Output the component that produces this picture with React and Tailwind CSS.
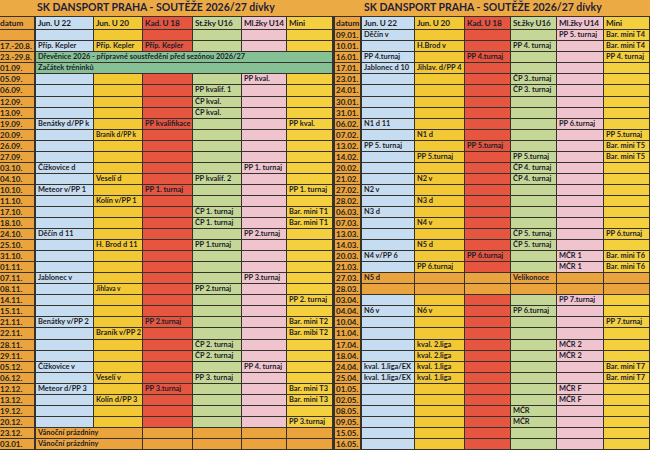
const BG = [
  'bg-[#eaa33d]',
  'bg-[#c6dcf0]',
  'bg-[#f2c935]',
  'bg-[#e5553f]',
  'bg-[#c5d797]',
  'bg-[#f0c4cf]',
  'bg-[#f4cf3e]',
];

const HEAD = ['datum', 'Jun. U 22', 'Jun. U 20', 'Kad. U 18', 'St.žky U16', 'Ml.žky U14', 'Mini'];

const e = '';
const LEFT = [
  [e, e, e, e, e, e, e],
  ['17.-20.8.', 'Příp. Kepler', 'Příp. Kepler', 'Příp. Kepler', e, e, e],
  { d: '23.-29.8.', green: 'Dřevěnice 2026 - přípravné soustředění před sezónou 2026/27' },
  { d: '01.09.', green: 'Začátek tréninků' },
  ['05.09.', e, e, e, e, 'PP kval.', e],
  ['06.09.', e, e, e, 'PP kvalif. 1', e, e],
  ['12.09.', e, e, e, 'ČP kval.', e, e],
  ['13.09.', e, e, e, 'ČP kval.', e, e],
  ['19.09.', 'Benátky d/PP k', e, 'PP kvalifikace', e, e, 'PP kval.'],
  ['20.09.', e, '~Braník d/PP k', e, e, e, e],
  ['26.09.', e, e, e, e, e, e],
  ['27.09.', e, e, e, e, e, e],
  ['03.10.', 'Čížkovice d', e, e, e, 'PP 1. turnaj', e],
  ['04.10.', e, 'Veselí d', e, 'PP kvalif. 2', e, e],
  ['10.10.', 'Meteor v/PP 1', e, 'PP 1. turnaj', e, e, 'PP 1. turnaj'],
  ['11.10.', e, 'Kolín v/PP 1', e, e, e, e],
  ['17.10.', e, e, e, 'ČP 1. turnaj', e, 'Bar. mini T1'],
  ['18.10.', e, e, e, 'ČP 1. turnaj', e, 'Bar. mini T1'],
  ['24.10.', 'Děčín d 11', e, e, e, 'PP 2.turnaj', e],
  ['25.10.', e, 'H. Brod d 11', e, 'PP 1.turnaj', e, e],
  ['31.10.', e, e, e, e, e, e],
  ['01.11.', e, e, e, e, e, e],
  ['07.11.', 'Jablonec v', e, e, e, 'PP 3.turnaj', e],
  ['08.11.', e, '~Jihlava v', e, 'PP 2.turnaj', e, e],
  ['14.11.', e, e, e, e, e, 'PP 2. turnaj'],
  ['15.11.', e, e, e, e, e, e],
  ['21.11.', 'Benátky v/PP 2', e, 'PP 2.turnaj', e, e, 'Bar. mini T2'],
  ['22.11.', e, 'Braník v/PP 2', e, e, e, 'Bar. mibi T2'],
  ['28.11.', e, e, e, 'ČP 2. turnaj', e, e],
  ['29.11.', e, e, e, 'ČP 2. turnaj', e, e],
  ['05.12.', 'Čížkovice v', e, e, e, 'PP 4. turnaj', e],
  ['06.12.', e, 'Veselí v', e, 'PP 3. turnaj', e, e],
  ['12.12.', 'Meteor d/PP 3', e, 'PP 3.turnaj', e, e, 'Bar. mini T3'],
  ['13.12.', e, 'Kolín d/PP 3', e, e, e, 'Bar. mini T3'],
  ['19.12.', e, e, e, e, e, e],
  ['20.12.', e, e, e, e, e, 'PP 3.turnaj'],
  { d: '23.12.', orange: ['Vánoční prázdniny', e, e, e, e] },
  { d: '03.01.', orange: ['Vánoční prázdniny', e, e, e, e] },
];

const RIGHT = [
  ['09.01.', 'Děčín v', e, e, e, 'PP 5. turnaj', 'Bar. mini T4'],
  ['10.01.', e, 'H.Brod v', e, 'PP 4. turnaj', e, 'Bar. mini T4'],
  ['16.01.', 'PP 4.turnaj', e, 'PP 4.turnaj', e, e, 'PP 4. turnaj'],
  ['17.01.', 'Jablonec d 10', 'Jihlav. d/PP 4', e, e, e, e],
  ['23.01.', e, e, e, 'ČP 3..turnaj', e, e],
  ['24.01.', e, e, e, 'ČP 3. turnaj', e, e],
  ['30.01.', e, e, e, e, e, e],
  ['31.01.', e, e, e, e, e, e],
  ['06.02.', 'N1 d 11', e, e, e, 'PP 6.turnaj', e],
  ['07.02.', e, 'N1 d', e, e, e, 'PP 5.turnaj'],
  ['13.02.', 'PP 5. turnaj', e, 'PP 5.turnaj', e, e, 'Bar. mini T5'],
  ['14.02.', e, 'PP 5.turnaj', e, 'PP 5.turnaj', e, 'Bar. mini T5'],
  ['20.02.', e, e, e, 'ČP 4. turnaj', e, e],
  ['21.02.', e, 'N2 v', e, 'ČP 4. turnaj', e, e],
  ['27.02.', 'N2 v', e, e, e, e, e],
  ['28.02.', e, 'N3 d', e, e, e, e],
  ['06.03.', 'N3 d', e, e, e, e, e],
  ['07.03.', e, 'N4 v', e, e, e, e],
  ['13.03.', e, e, e, 'ČP 5. turnaj', e, 'PP 6.turnaj'],
  ['14.03.', e, 'N5 d', e, 'ČP 5. turnaj', e, e],
  ['20.03.', 'N4 v/PP 6', e, 'PP 6.turnaj', e, 'MČR 1', 'Bar. mini T6'],
  ['21.03.', e, 'PP 6.turnaj', e, e, 'MČR 1', 'Bar. mini T6'],
  { d: '27.03.', orange: ['N5 d', e, e, 'Velikonoce', e, e] },
  { d: '28.03.', orange: [e, e, e, e, e, e] },
  ['03.04.', e, e, e, e, 'PP 7.turnaj', e],
  ['04.04.', 'N6 v', 'N6 v', e, 'PP 6.turnaj', e, e],
  ['10.04.', e, e, e, e, e, 'PP 7.turnaj'],
  ['11.04.', e, e, e, e, e, e],
  ['17.04.', e, 'kval. 2.liga', e, e, 'MČR 2', e],
  ['18.04.', e, 'kval. 2.liga', e, e, 'MČR 2', e],
  ['24.04.', 'kval. 1.liga/EX', 'kval. 1.liga', e, e, e, 'Bar. mini T7'],
  ['25.04.', 'kval. 1.liga/EX', 'kval. 1.liga', e, e, e, 'Bar. mini T7'],
  ['01.05.', e, e, e, e, 'MČR F', e],
  ['02.05.', e, e, e, e, 'MČR F', e],
  ['08.05.', e, e, e, 'MČR', e, e],
  ['09.05.', e, e, e, 'MČR', e, e],
  ['15.05.', e, e, e, e, e, e],
  ['16.05.', e, e, e, e, e, e],
];

const line = 'border-b border-r border-[#36322c]';
const txt = 'whitespace-nowrap font-bold text-[#1c1c2a]';

const Cell = ({ bg, children, span = '' }) => {
  const small = typeof children === 'string' && children.startsWith('~');
  return (
    <div className={`${bg} ${line} ${span} ${txt} pl-[2px] ${small ? 'text-[6.5px]' : 'text-[7.4px]'} leading-[10px]`}>
      {small ? children.slice(1) : children}
    </div>
  );
};

const DateCell = ({ children, right }) => (
  <div className={`${BG[0]} border-b border-r-2 border-[#36322c] ${right ? 'border-l-2 pl-px' : 'pl-0'} ${txt} text-[8px] leading-[10px] text-[#241f1a]`}>
    {children}
  </div>
);

const Table = ({ rows, cols, right }) => (
  <div className="flex flex-col">
    <div className={`h-[17px] flex items-center ${right ? 'pl-[31px]' : 'pl-[37px]'}`}>
      <span className="font-bold text-[10.5px] text-[#1d203c] whitespace-nowrap">SK DANSPORT PRAHA - SOUTĚŽE 2026/27 dívky</span>
    </div>
    <div className={`grid ${cols} grid-rows-[13px] auto-rows-[11.05px] border-t border-[#36322c]`}>
      {HEAD.map((h, i) =>
        i === 0 ? (
          <div key={h} className={`${BG[0]} border-b border-r-2 border-[#36322c] ${right ? 'border-l-2 pl-px' : ''} ${txt} text-[8.2px] leading-[12px] text-[#1b1e3c]`}>{h}</div>
        ) : (
          <div key={h} className={`${BG[i]} ${line} ${txt} pl-[2px] text-[8.2px] tracking-[-0.15px] leading-[12px] text-[#1b1e3c] overflow-hidden`}>{h}</div>
        )
      )}
      {rows.map((r, ri) => {
        if (Array.isArray(r)) {
          return r.map((c, i) =>
            i === 0 ? <DateCell key={`${ri}-${i}`} right={right}>{c}</DateCell> : <Cell key={`${ri}-${i}`} bg={BG[i]}>{c}</Cell>
          );
        }
        if (r.green) {
          return [
            <DateCell key={`${ri}-d`} right={right}>{r.d}</DateCell>,
            <Cell key={`${ri}-g`} bg="bg-[#86c196]" span="col-span-6">{r.green}</Cell>,
          ];
        }
        return [
          <DateCell key={`${ri}-d`} right={right}>{r.d}</DateCell>,
          ...(r.orange.length === 5
            ? [<Cell key={`${ri}-o`} bg={BG[0]} span="col-span-2">{r.orange[0]}</Cell>, ...r.orange.slice(1).map((c, i) => <Cell key={`${ri}-${i}`} bg={BG[0]}>{c}</Cell>)]
            : r.orange.map((c, i) => <Cell key={`${ri}-${i}`} bg={BG[0]}>{c}</Cell>)),
        ];
      })}
    </div>
  </div>
);

export default function App() {
  return (
    <div className="w-[650px] h-[450px] overflow-hidden bg-[#ecaa45] flex" style={{ fontFamily: 'Lato, "Open Sans", sans-serif' }}>
      <Table rows={LEFT} cols="grid-cols-[36px_58px_49px_50px_49px_45px_46px]" />
      <Table rows={RIGHT} cols="grid-cols-[29px_53px_50px_46px_46px_47px_46px]" right />
    </div>
  );
}
